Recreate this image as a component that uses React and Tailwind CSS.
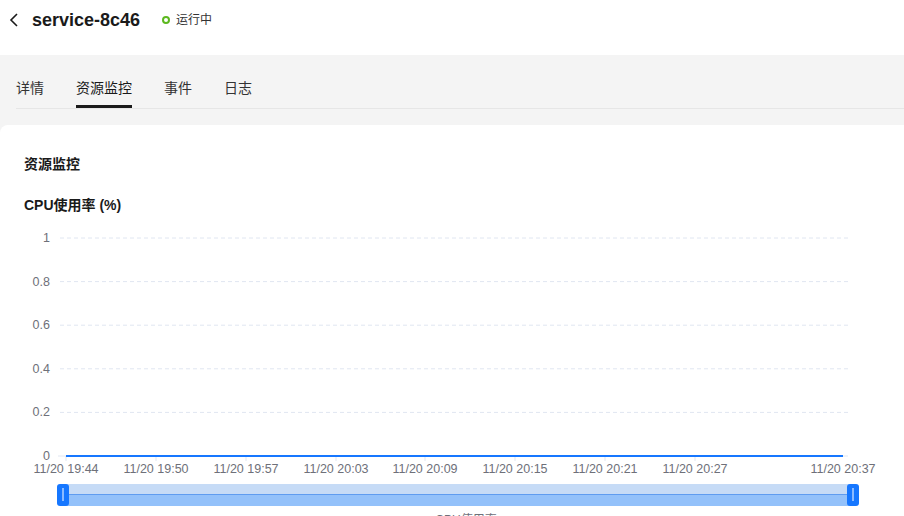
import React from 'react';

const font = { fontFamily: '"Liberation Sans", "Noto Sans CJK SC", sans-serif' };

const tabs = ['详情', '资源监控', '事件', '日志'];
const yTicks = [
  { label: '1', y: 22 },
  { label: '0.8', y: 65.6 },
  { label: '0.6', y: 109.2 },
  { label: '0.4', y: 152.8 },
  { label: '0.2', y: 196.4 },
  { label: '0', y: 240 },
];
const xTicks = [
  { label: '11/20 19:44', x: 66 },
  { label: '11/20 19:50', x: 156 },
  { label: '11/20 19:57', x: 246 },
  { label: '11/20 20:03', x: 336 },
  { label: '11/20 20:09', x: 425 },
  { label: '11/20 20:15', x: 515 },
  { label: '11/20 20:21', x: 605 },
  { label: '11/20 20:27', x: 695 },
  { label: '11/20 20:37', x: 843 },
];

const CpuChart = () => (
  <svg width="904" height="300" viewBox="0 0 904 300" className="block" style={font}>
    {yTicks.map((t) => (
      <g key={t.label}>
        {t.label !== '0' && (
          <line x1="60" x2="848" y1={t.y} y2={t.y} stroke="#e0e6f1" strokeDasharray="4 3" />
        )}
        <text x="50" y={t.y + 4} textAnchor="end" fontSize="12.5" fill="#6e7079">{t.label}</text>
      </g>
    ))}
    {/* axis */}
    <line x1="58" x2="848" y1="240" y2="240" stroke="#e0e6f1" />
    {xTicks.slice(0, 8).map((t) => (
      <line key={t.x} x1={t.x} x2={t.x} y1="240" y2="245" stroke="#e0e6f1" />
    ))}
    <line x1="66" x2="843" y1="240" y2="240" stroke="#1677ff" strokeWidth="2" />
    {xTicks.map((t) => (
      <text key={t.label} x={t.x} y="257" textAnchor="middle" fontSize="12.5" fill="#6e7079">{t.label}</text>
    ))}
    {/* data zoom */}
    <rect x="62" y="268" width="792" height="10" fill="#c6dbf6" />
    <rect x="62" y="278" width="792" height="12" fill="#93c1fa" />
    <line x1="62" x2="854" y1="278.5" y2="278.5" stroke="#5f9cf0" />
    {[57, 847].map((x) => (
      <g key={x}>
        <rect x={x} y="268" width="12" height="22" rx="3" fill="#1677ff" />
        <line x1={x + 6} x2={x + 6} y1="272" y2="285" stroke="#fff" strokeWidth="1" />
      </g>
    ))}
    <text x="466" y="308" textAnchor="middle" fontSize="12" fill="#6e7079">CPU使用率</text>
  </svg>
);

export default function App() {
  return (
    <div className="w-[904px] h-[516px] overflow-hidden bg-[#f4f4f4] text-[#1a1a1a]" style={font}>
      <div className="h-[55px] bg-white flex items-start pt-[8px] pl-[6px]">
        <svg width="16" height="24" viewBox="0 0 16 24">
          <path d="M11 6 L5 12 L11 18" fill="none" stroke="#1a1a1a" strokeWidth="1.6" />
        </svg>
        <span className="ml-[10px] text-[18px] leading-[24px] font-bold text-[#1a1a1a]">service-8c46</span>
        <span className="ml-[22px] flex items-center h-[24px]">
          <span className="w-[8px] h-[8px] rounded-full border-2 border-[#5cb81f]" />
          <span className="ml-[6px] text-[12px] text-[#333]">运行中</span>
        </span>
      </div>

      <div className="pt-[22px] ml-4 flex gap-8 border-b border-[#e6e6e6]">
        {tabs.map((t) => (
          <div
            key={t}
            className={`text-[14px] leading-[22px] pb-[6px] ${t === '资源监控' ? 'border-b-[3px] border-[#1a1a1a] text-[#1a1a1a]' : 'border-b-[3px] border-transparent text-[#333]'}`}
          >
            {t}
          </div>
        ))}
      </div>

      <div className="mt-4 bg-white rounded-tl-lg h-[400px]">
        <div className="px-6 pt-7 text-[14px] leading-[22px] font-bold text-[#1a1a1a]">资源监控</div>
        <div className="px-6 mt-[19px] text-[14px] leading-[22px] font-bold text-[#1a1a1a]">CPU使用率 (%)</div>
        <CpuChart />
      </div>
    </div>
  );
}
